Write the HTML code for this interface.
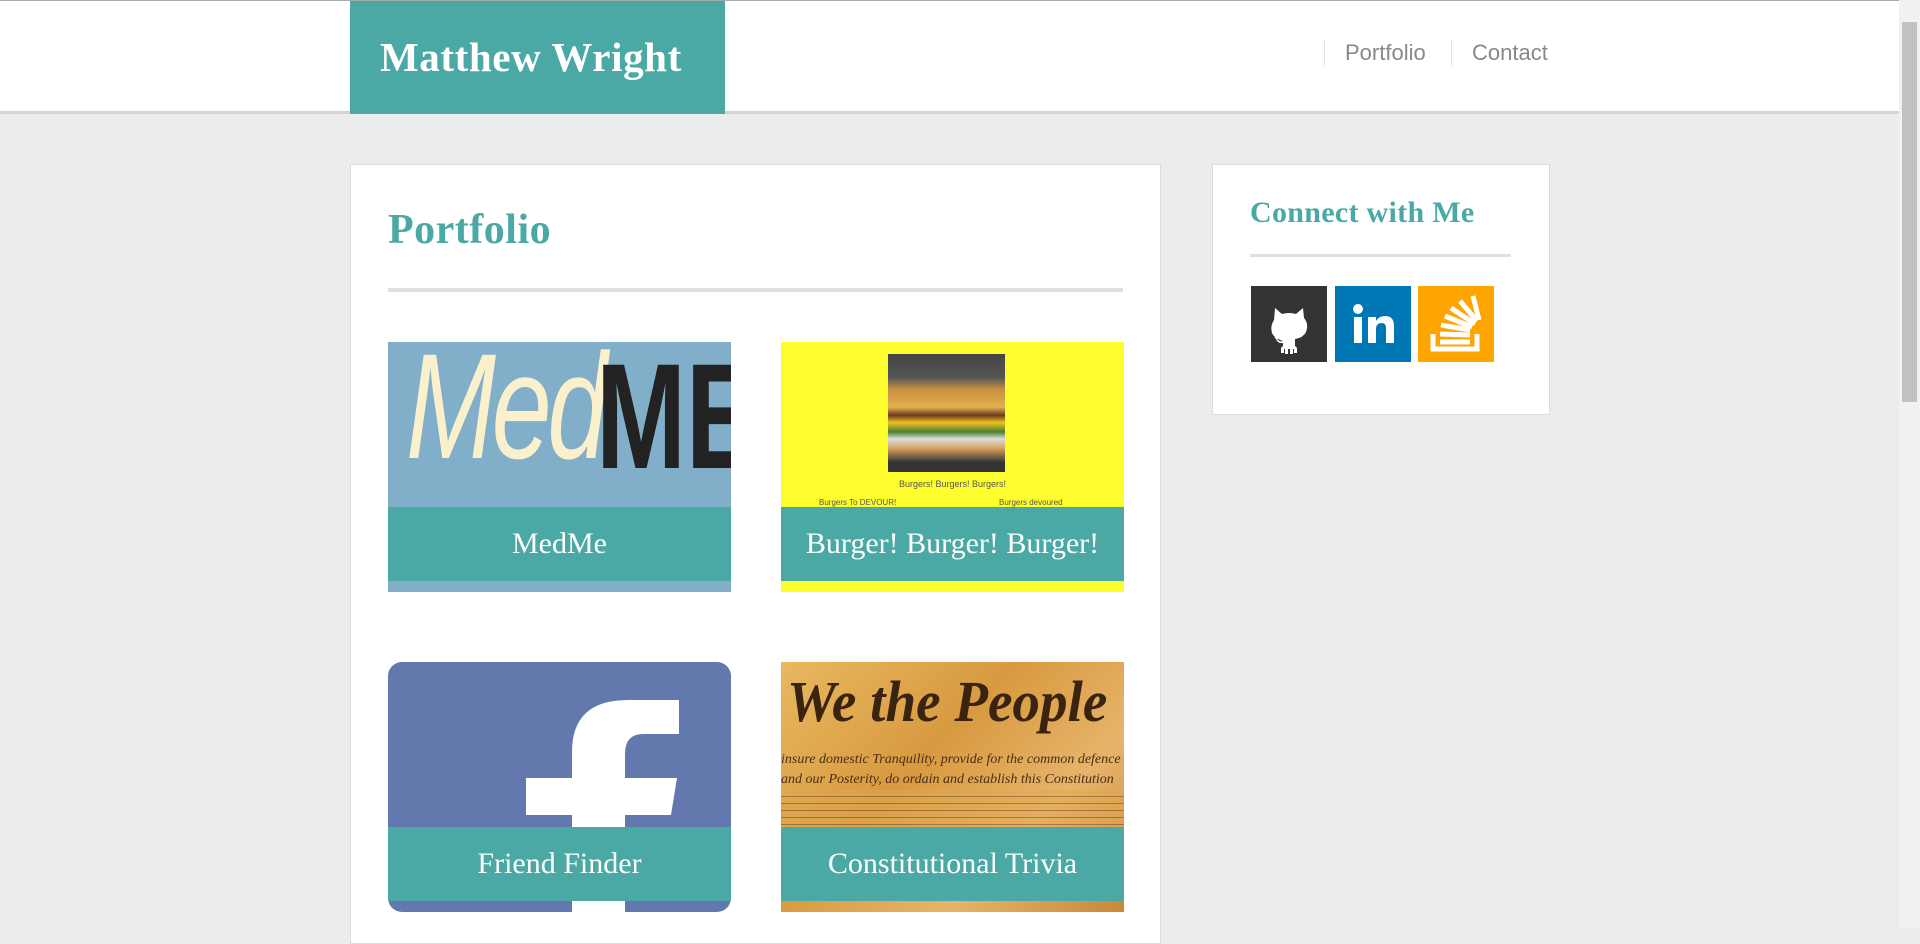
<!DOCTYPE html>
<html><head><meta charset="utf-8">
<style>
*{margin:0;padding:0;box-sizing:border-box}
body{width:1920px;height:928px;overflow:hidden;background:#ececec;font-family:"Liberation Sans",sans-serif;position:relative}
.hdr{position:absolute;left:0;top:0;width:1899px;height:114px;background:#fff;border-top:1px solid #aaa;border-bottom:3px solid #d4d4d4}
.logo{position:absolute;left:350px;top:1px;width:375px;height:113px;background:#4aa9a4;color:#fff;font-family:"Liberation Serif",serif;font-weight:bold;font-size:41px;letter-spacing:0.6px;line-height:112px;padding-left:30px;white-space:nowrap}
.nav{position:absolute;top:40px;font-size:22px;color:#888;border-left:1px solid #e3e3e3;padding-left:20px;height:26px;line-height:26px}
.card{position:absolute;background:#fff;border:1px solid #dcdcdc}
h2{font-family:"Liberation Serif",serif;color:#4aa9a4;font-weight:bold;position:absolute;white-space:nowrap}
.hr{position:absolute;background:#e0e0e0}
.tile{position:absolute;width:343px;height:250px;overflow:hidden}
.cap{position:absolute;left:0;top:165px;width:100%;height:74px;background:#4aa9a4;color:#fff;font-family:"Liberation Serif",serif;font-size:30px;text-align:center;line-height:74px;white-space:nowrap}
.sb{position:absolute;right:0;top:0;width:21px;height:928px;background:#f1f1f1}
.ic{position:absolute;top:286px;width:76px;height:76px}
</style></head><body>
<div class="hdr"></div>
<div class="logo">Matthew Wright</div>
<div class="nav" style="left:1324px">Portfolio</div>
<div class="nav" style="left:1451px">Contact</div>

<div class="card" style="left:350px;top:164px;width:811px;height:780px"></div>
<h2 style="left:388px;top:206px;font-size:42px;letter-spacing:0.5px">Portfolio</h2>
<div class="hr" style="left:388px;top:288px;width:735px;height:4px"></div>

<div class="tile" style="left:388px;top:342px;background:#81aec8">
 <div style="position:absolute;left:18px;top:-22px;font-size:150px;font-style:italic;color:#fbf0cc;transform:scaleX(0.72);transform-origin:left top;letter-spacing:-6px">Med</div>
 <div style="position:absolute;left:208px;top:-12px;font-size:150px;color:#222;transform:scaleX(0.72);transform-origin:left top;font-weight:bold">ME</div>
 <div class="cap">MedMe</div></div>
<div class="tile" style="left:781px;top:342px;background:#fefe2e">
 <div style="position:absolute;left:107px;top:12px;width:117px;height:118px;background:linear-gradient(#444 0,#555 20%,#c89040 30%,#e4b050 45%,#6a3a20 52%,#f0c020 58%,#4a8030 66%,#ddd 72%,#d8a060 80%,#333 92%)"></div>
 <div style="position:absolute;left:0;width:100%;top:137px;text-align:center;font-size:9px;color:#555">Burgers! Burgers! Burgers!</div>
 <div style="position:absolute;left:38px;top:156px;font-size:8px;color:#555">Burgers To DEVOUR!</div>
 <div style="position:absolute;left:218px;top:156px;font-size:8px;color:#555">Burgers devoured</div>
 <div class="cap">Burger! Burger! Burger!</div></div>
<div class="tile" style="left:388px;top:662px;background:#6379ad;border-radius:14px">
 <svg style="position:absolute;left:0;top:0" width="343" height="250"><path d="M184 250V153H138V116H184V90Q184 38 240 38H291V72H255Q237 72 237 92V116H289L283 153H237V250Z" fill="#fff"/></svg>
 <div class="cap">Friend Finder</div></div>
<div class="tile" style="left:781px;top:662px;background:linear-gradient(135deg,#e8b860,#d89a40 40%,#e6b46a 70%,#c88838)">
 <div style="position:absolute;left:6px;top:6px;font-family:'Liberation Serif',serif;font-style:italic;font-weight:bold;font-size:58px;color:#3a2410;transform:scaleX(0.95);transform-origin:left top;white-space:nowrap">We the People</div>
 <div style="position:absolute;left:0;top:88px;font-family:'Liberation Serif',serif;font-style:italic;font-size:14px;color:#4a2e14;line-height:20px;white-space:nowrap">insure domestic Tranquility, provide for the common defence<br>and our Posterity, do ordain and establish this Constitution</div>
 <div style="position:absolute;left:0;top:128px;width:100%;height:40px;background:repeating-linear-gradient(#e0a850 0 6px,#6a4520 6px 7px);opacity:.5"></div>
 <div class="cap">Constitutional Trivia</div></div>

<div class="card" style="left:1212px;top:164px;width:338px;height:251px"></div>
<h2 style="left:1250px;top:196px;font-size:30px;letter-spacing:0.3px">Connect with Me</h2>
<div class="hr" style="left:1250px;top:254px;width:261px;height:3px"></div>
<div class="ic" style="left:1251px;background:#333">
 <svg width="76" height="76" viewBox="0 0 76 76"><path d="M24 22l7 6q7-2 14 0l7-6 1 10q5 6 2 14q-3 6-11 7v7q2 1 2 3v4h-3v-4h-1v5h-3v-5h-2v5h-3v-5h-1v4h-3v-4q0-2 2-3v-3q-5 1-7-4l-2-2q3 0 4 3q2 2 5 1q-9-3-11-8q-2-7 2-13z" fill="#fff"/></svg></div>
<div class="ic" style="left:1335px;background:#0077b5">
 <svg width="76" height="76" viewBox="0 0 76 76"><rect x="19" y="31" width="8" height="26" fill="#fff"/><circle cx="23" cy="23" r="5" fill="#fff"/><path d="M33 31h8v4q3-5 9-5q9 0 9 10v17h-8V42q0-5-4-5q-6 0-6 6v14h-8z" fill="#fff"/></svg></div>
<div class="ic" style="left:1418px;background:#fea501">
 <svg width="76" height="76" viewBox="0 0 76 76" fill="none" stroke="#fff" stroke-width="5"><path d="M15 48v15h44V48"/><path d="M22 56h30M22 48l30 1M23 39l29 5M27 30l27 11M33 22l24 16M42 15l17 20M55 10l6 24"/></svg></div>

<div class="sb"><div style="position:absolute;left:3px;top:22px;width:15px;height:380px;background:#c1c1c1"></div></div>
</body></html>
